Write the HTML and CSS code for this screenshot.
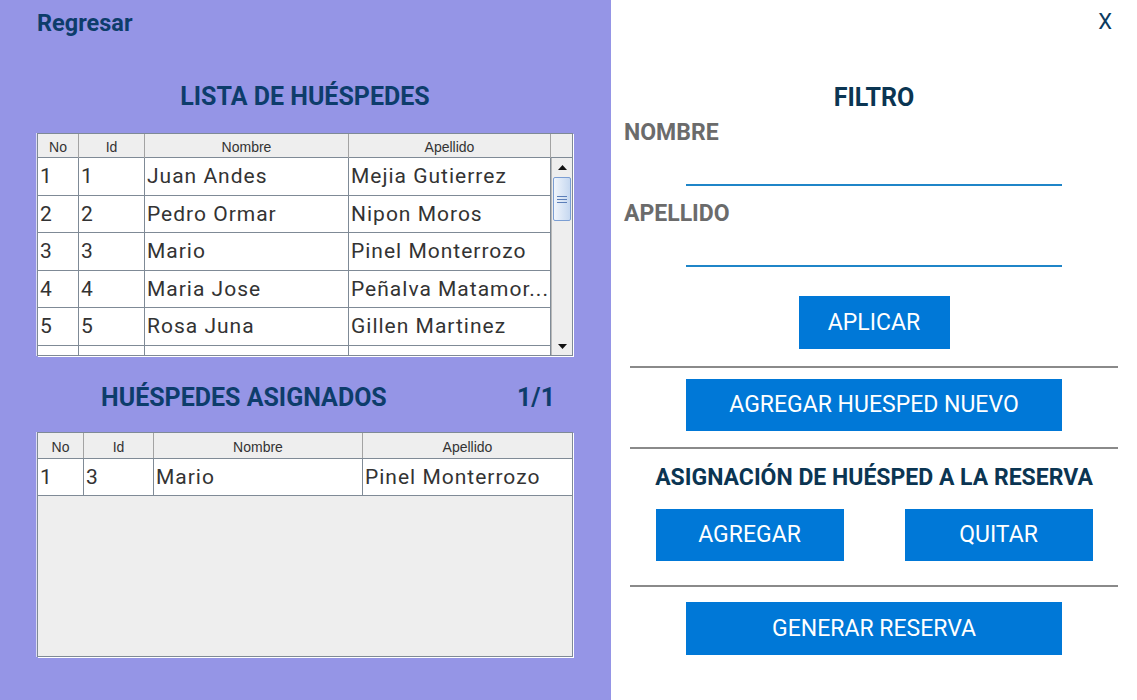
FILE: index.html
```html
<!DOCTYPE html>
<html lang="es">
<head>
<meta charset="utf-8">
<title>Huéspedes</title>
<link rel="stylesheet" href="styles.css">
</head>
<body>
<div class="app">
  <section class="left">
    <div class="back">Regresar</div>
    <h1 class="title">LISTA DE HUÉSPEDES</h1>
    <div class="table t1">
      <div class="thead">
        <div class="th">No</div><div class="th">Id</div><div class="th">Nombre</div><div class="th">Apellido</div><div class="th corner"></div>
      </div>
      <div class="tbody-wrap">
        <div class="rows">
          <div class="tr"><div class="td">1</div><div class="td">1</div><div class="td">Juan Andes</div><div class="td">Mejia Gutierrez</div></div>
          <div class="tr"><div class="td">2</div><div class="td">2</div><div class="td">Pedro Ormar</div><div class="td">Nipon Moros</div></div>
          <div class="tr"><div class="td">3</div><div class="td">3</div><div class="td">Mario</div><div class="td">Pinel Monterrozo</div></div>
          <div class="tr"><div class="td">4</div><div class="td">4</div><div class="td">Maria Jose</div><div class="td">Peñalva Matamor...</div></div>
          <div class="tr"><div class="td">5</div><div class="td">5</div><div class="td">Rosa Juna</div><div class="td">Gillen Martinez</div></div>
          <div class="tr"><div class="td">6</div><div class="td">6</div><div class="td">Luis Alfredo</div><div class="td">Lopez Lainez</div></div>
        </div>
        <div class="scrollbar">
          <div class="sb-btn"><svg width="9" height="5" viewBox="0 0 9 5"><path d="M0 5 L4.5 0 L9 5 Z" fill="#111"/></svg></div>
          <div class="sb-thumb"><span></span><span></span><span></span></div>
          <div class="sb-track"></div>
          <div class="sb-btn"><svg width="9" height="5" viewBox="0 0 9 5"><path d="M0 0 L4.5 5 L9 0 Z" fill="#111"/></svg></div>
        </div>
      </div>
    </div>
    <div class="sub">
      <h2 class="sub-title">HUÉSPEDES ASIGNADOS</h2>
      <span class="count">1/1</span>
    </div>
    <div class="table t2">
      <div class="thead">
        <div class="th">No</div><div class="th">Id</div><div class="th">Nombre</div><div class="th">Apellido</div>
      </div>
      <div class="rows">
        <div class="tr"><div class="td">1</div><div class="td">3</div><div class="td">Mario</div><div class="td">Pinel Monterrozo</div></div>
      </div>
    </div>
  </section>
  <section class="right">
    <div class="close-row"><span class="close">X</span></div>
    <h2 class="filter-title">FILTRO</h2>
    <div class="label label-first">NOMBRE</div>
    <div class="field"></div>
    <div class="label label-second">APELLIDO</div>
    <div class="field"></div>
    <button class="btn apply">APLICAR</button>
    <div class="sep sep1"></div>
    <button class="btn wide new">AGREGAR HUESPED NUEVO</button>
    <div class="sep sep2"></div>
    <h2 class="assign-title">ASIGNACIÓN DE HUÉSPED A LA RESERVA</h2>
    <div class="btn-row">
      <button class="btn half">AGREGAR</button>
      <button class="btn half">QUITAR</button>
    </div>
    <div class="sep sep3"></div>
    <button class="btn wide generate">GENERAR RESERVA</button>
  </section>
</div>
</body>
</html>
```

FILE: styles.css
```css
* { box-sizing: border-box; margin: 0; padding: 0; }

html, body { height: 100%; }

body {
  font-family: Roboto, "Liberation Sans", sans-serif;
  background: #ffffff;
  overflow: hidden;
}

.app {
  display: flex;
  height: 700px;
}

/* ---------- left panel ---------- */
.left {
  width: 611px;
  flex: none;
  background: #9595e6;
  padding-left: 37px;
}

.back {
  margin-top: 11px;
  font-size: 23.5px;
  line-height: 25px;
  font-weight: 700;
  color: #0d3d6b;
}

.title {
  margin-top: 47px;
  width: 536px;
  text-align: center;
  font-size: 25px;
  line-height: 28px;
  font-weight: 700;
  color: #0d3d6b;
}

.table {
  width: 536px;
  border: 1px solid #7f8a96;
  background: #eeeeee;
  box-shadow: -1px 0 0 #dcdcf4, 1px 1px 0 #ffffff;
}

.t1 {
  margin-top: 22px;
  height: 223px;
}

.thead {
  display: grid;
  height: 24px;
  background: #eeeeee;
  border-bottom: 1px solid #7f8a96;
}

.t1 .thead { grid-template-columns: 41px 66px 204px 202px 21px; }

.th {
  font-family: "Liberation Sans", Arial, sans-serif;
  font-size: 14px;
  line-height: 22px;
  padding-top: 2px;
  color: #333333;
  text-align: center;
  border-right: 1px solid #a3a3a3;
}

.th.corner { border-right: none; }

.tbody-wrap {
  display: flex;
  height: 197px;
  overflow: hidden;
}

.rows {
  display: flex;
  flex-direction: column;
}

.t1 .rows { width: 513px; }

.tr {
  display: grid;
  height: 37.5px;
  flex: none;
}

.t1 .tr { grid-template-columns: 41px 66px 204px 202px; }

.td {
  background: #ffffff;
  border-right: 1px solid #7f8a96;
  border-bottom: 1px solid #7f8a96;
  padding-left: 2px;
  font-size: 21px;
  letter-spacing: 1px;
  line-height: 36px;
  color: #333333;
  white-space: nowrap;
  overflow: hidden;
}

.scrollbar {
  width: 21px;
  flex: none;
  display: flex;
  flex-direction: column;
  background: #eeeeee;
  border-left: 1px solid #b9b9b9;
}

.sb-btn {
  height: 18px;
  flex: none;
  display: flex;
  align-items: center;
  justify-content: center;
  background: #eeeeee;
}

.sb-thumb {
  height: 44px;
  flex: none;
  margin: 1px 1px 0;
  border: 1px solid #7b9ed3;
  border-radius: 2px;
  background: linear-gradient(to right, #f0f5fc, #c6d8f0);
  display: flex;
  flex-direction: column;
  align-items: center;
  justify-content: center;
  gap: 2px;
}

.sb-thumb span {
  display: block;
  width: 10px;
  height: 1px;
  background: #5c7fb9;
}

.sb-track { flex: 1; }

.sub {
  display: flex;
  align-items: baseline;
  width: 536px;
  margin-top: 27.5px;
  font-size: 25px;
  line-height: 28px;
  font-weight: 700;
  color: #0d3d6b;
}

.sub-title {
  margin-left: 64px;
  font-size: 25px;
  font-weight: 700;
}

.count {
  margin-left: auto;
  margin-right: 18px;
}

.t2 {
  margin-top: 20.5px;
  height: 225px;
}

.t2 .thead {
  height: 26px;
  grid-template-columns: 46px 70px 209px 1fr;
}

.t2 .th { line-height: 22px; padding-top: 3px; }
.t2 .th:last-child { border-right: none; }

.t2 .tr {
  height: 37px;
  grid-template-columns: 46px 70px 209px 1fr;
}

.t2 .td:last-child { border-right: none; }

/* ---------- right panel ---------- */
.right {
  flex: 1;
  display: flex;
  flex-direction: column;
  padding: 0 13px;
  background: #ffffff;
}

.close-row {
  margin-top: 10px;
  height: 24px;
  display: flex;
  justify-content: flex-end;
}

.close {
  margin-right: 12px;
  font-size: 22px;
  line-height: 24px;
  color: #0b3a5e;
}

.filter-title {
  margin-top: 49.5px;
  text-align: center;
  font-size: 25px;
  line-height: 28px;
  font-weight: 700;
  color: #0b3552;
}

.label {
  font-size: 23px;
  line-height: 26px;
  font-weight: 700;
  color: #6b6b6b;
}

.label-first { margin-top: 8px; }
.label-second { margin-top: 15px; }

.field {
  width: 376px;
  height: 30px;
  margin: 10px auto 0;
  border-bottom: 2px solid #1f85c8;
}

.btn {
  display: flex;
  align-items: center;
  justify-content: center;
  border: none;
  background: #0078d7;
  color: #ffffff;
  font-family: Roboto, "Liberation Sans", sans-serif;
  font-size: 23px;
  font-weight: 400;
  margin-left: auto;
  margin-right: auto;
  flex: none;
}

.apply {
  width: 151px;
  height: 53px;
  margin-top: 29px;
}

.sep {
  height: 2px;
  margin: 0 6px;
  background: #8a8a8a;
  flex: none;
}

.sep1 { margin-top: 17px; }
.sep2 { margin-top: 16px; }
.sep3 { margin-top: 24px; }

.wide {
  width: 376px;
  height: 52px;
}

.new { margin-top: 11px; }

.assign-title {
  margin-top: 16px;
  text-align: center;
  font-size: 23px;
  line-height: 26px;
  font-weight: 700;
  color: #0b3552;
}

.btn-row {
  margin-top: 18px;
  display: flex;
  justify-content: center;
  gap: 61px;
}

.half {
  width: 188px;
  height: 52px;
  margin: 0;
}

.generate {
  height: 53px;
  margin-top: 15px;
}
```
